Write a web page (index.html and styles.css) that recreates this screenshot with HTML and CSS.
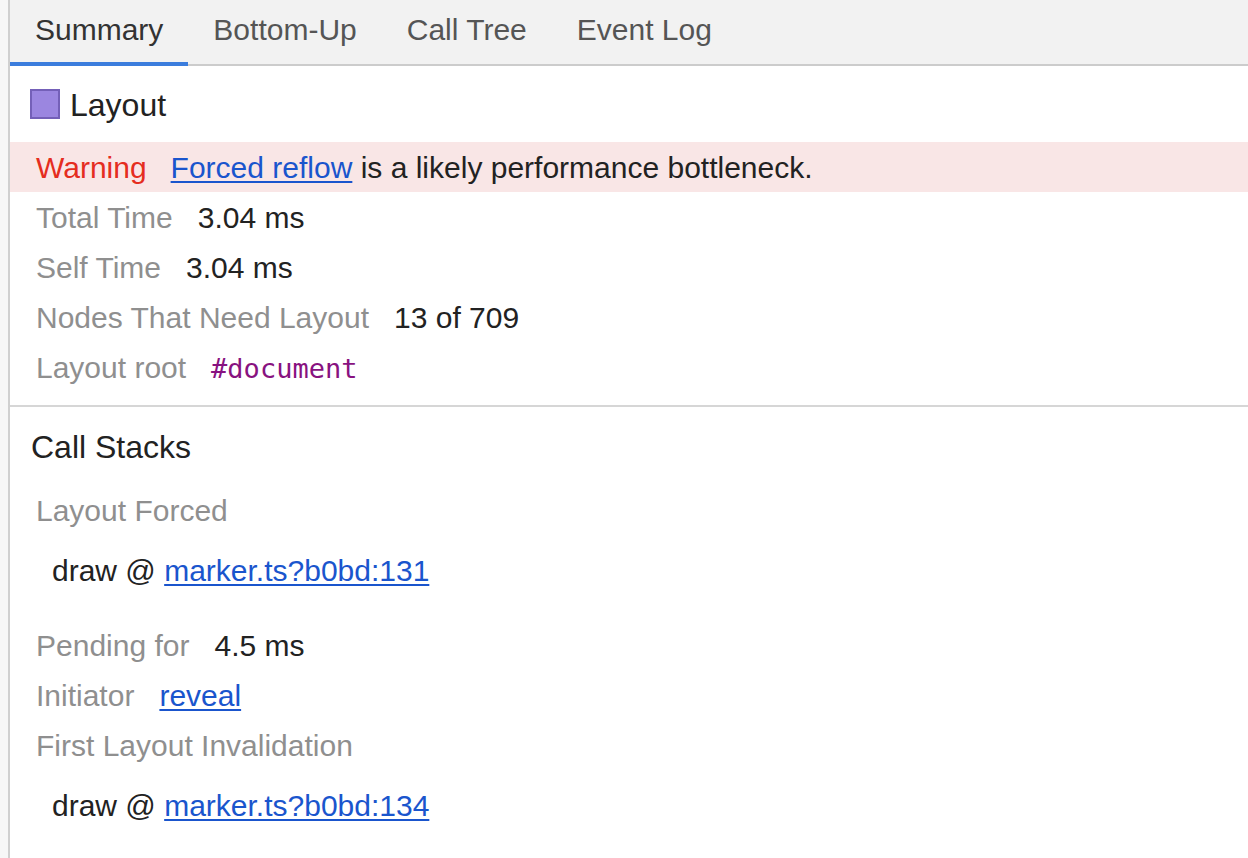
FILE: index.html
```html
<!DOCTYPE html>
<html>
<head>
<meta charset="utf-8">
<link rel="stylesheet" href="styles.css">
</head>
<body>
<div class="app">
  <div class="panel">
    <div class="tabs">
      <div class="tab active">Summary</div>
      <div class="tab">Bottom-Up</div>
      <div class="tab">Call Tree</div>
      <div class="tab">Event Log</div>
    </div>
    <div class="section">
      <div class="title"><span class="swatch"></span><span>Layout</span></div>
      <div class="warning"><span class="warn-label">Warning</span><a class="link">Forced reflow</a>&nbsp;is a likely performance bottleneck.</div>
      <div class="row"><span class="label">Total Time</span><span class="value">3.04 ms</span></div>
      <div class="row"><span class="label">Self Time</span><span class="value">3.04 ms</span></div>
      <div class="row"><span class="label">Nodes That Need Layout</span><span class="value">13 of 709</span></div>
      <div class="row"><span class="label">Layout root</span><span class="mono">#document</span></div>
    </div>
    <div class="section stacks">
      <div class="heading">Call Stacks</div>
      <div class="row"><span class="label">Layout Forced</span></div>
      <div class="stack"><span class="value">draw @&nbsp;</span><a class="link">marker.ts?b0bd:131</a></div>
      <div class="row"><span class="label">Pending for</span><span class="value">4.5 ms</span></div>
      <div class="row"><span class="label">Initiator</span><a class="link">reveal</a></div>
      <div class="row"><span class="label">First Layout Invalidation</span></div>
      <div class="stack"><span class="value">draw @&nbsp;</span><a class="link">marker.ts?b0bd:134</a></div>
    </div>
  </div>
</div>
</body>
</html>
```
FILE: styles.css
```css
html, body {
  margin: 0;
  padding: 0;
}
body {
  font-family: "Liberation Sans", Arial, sans-serif;
  font-size: 30px;
  color: #222;
  background: #f7f7f7;
}
* {
  box-sizing: border-box;
}
.app {
  display: flex;
  height: 858px;
  padding-left: 8px;
  background: #f7f7f7;
  overflow: hidden;
}
.panel {
  flex: 1;
  background: #fff;
  border-left: 2px solid #d0d0d0;
}
.tabs {
  display: flex;
  height: 66px;
  background: #f2f2f2;
  box-shadow: inset 0 -2px 0 #cccccc;
}
.tab {
  padding: 0 25px;
  line-height: 60px;
  color: #555;
}
.tab.active {
  color: #333;
  box-shadow: inset 0 -4px 0 #3b7ddd;
}
.section {
  border-bottom: 2px solid #d6d6d6;
  padding-bottom: 13px;
}
.stacks {
  border-bottom: none;
}
.title {
  display: flex;
  align-items: center;
  height: 76px;
  padding: 2px 0 0 20px;
  font-size: 32px;
  color: #222;
}
.swatch {
  width: 30px;
  height: 30px;
  background: #9b86e0;
  border: 2px solid #7460b8;
  margin-right: 10px;
  margin-top: -2px;
}
.warning {
  display: flex;
  align-items: center;
  height: 50px;
  padding: 2px 0 0 26px;
  background: #f9e6e6;
  color: #222;
}
.warn-label {
  color: #e52d20;
  margin-right: 24px;
}
.link {
  color: #1a55cd;
  text-decoration: underline;
  text-decoration-thickness: 2px;
  text-underline-offset: 3px;
}
.row {
  display: flex;
  align-items: center;
  height: 50px;
  padding: 2px 0 0 26px;
}
.label {
  color: #8f8f8f;
  margin-right: 25px;
}
.value {
  color: #222;
}
.mono {
  font-family: "DejaVu Sans Mono", "Liberation Mono", monospace;
  font-size: 27px;
  color: #881280;
}
.heading {
  display: flex;
  align-items: center;
  height: 78px;
  padding: 2px 0 0 21px;
  font-size: 32px;
  color: #222;
}
.stack {
  display: flex;
  align-items: center;
  height: 85px;
  padding: 12px 0 25px 42px;
}
```
